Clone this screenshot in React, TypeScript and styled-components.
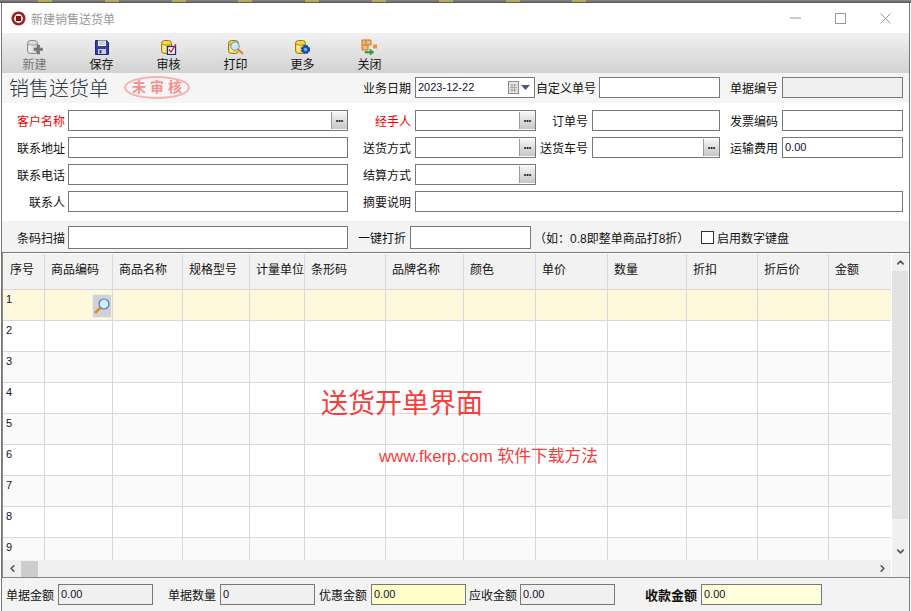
import styled, { createGlobalStyle } from "styled-components";
import { ChevronDown, ChevronLeft, ChevronRight, ChevronUp } from "lucide-react";

const GlobalStyle = createGlobalStyle`
  html, body {
    margin: 0;
    padding: 0;
    background: #fff;
    overflow: hidden;
  }
  * {
    box-sizing: border-box;
  }
`;

const FONT = `"Liberation Sans", "Noto Sans CJK SC", sans-serif`;

const Page = styled.div`
  width: 911px;
  height: 611px;
  display: flex;
  flex-direction: column;
  font-family: ${FONT};
  font-size: 12px;
  color: #111;
  overflow: hidden;
`;

const TopEdge = styled.div`
  height: 3px;
  flex: none;
  background: linear-gradient(#8a8a8a, #555);
`;

// 뒤쪽 창이 살짝 보이는 부분
const BackWindow = styled.div`
  width: 552px;
  height: 2px;
  margin-left: 38px;
  background: repeating-linear-gradient(
    90deg,
    #b9a95a 0 14px,
    transparent 14px 66.8px
  );
`;

const Frame = styled.div`
  flex: 1;
  width: 909px;
  margin-left: 1px;
  border-left: 1px solid #777;
  border-right: 1px solid #777;
  display: flex;
  flex-direction: column;
  min-height: 0;
`;

const TitleBar = styled.div`
  height: 30px;
  flex: none;
  background: #fff;
  display: flex;
  align-items: center;
  padding-left: 9px;
  gap: 5px;
  color: #999;
`;

const WindowControls = styled.div`
  margin-left: auto;
  padding-right: 1px;
  display: flex;
`;

const WindowControl = styled.div`
  width: 45px;
  height: 30px;
  display: flex;
  align-items: center;
  justify-content: center;
`;

const Toolbar = styled.div`
  height: 40px;
  flex: none;
  display: flex;
  background: linear-gradient(#f1f1f1, #d2d2d2);
`;

const ToolButton = styled.div<{ $disabled?: boolean }>`
  width: 67px;
  padding-top: 6px;
  display: flex;
  flex-direction: column;
  align-items: center;
  color: ${(p) => (p.$disabled ? "#777" : "#111")};
  line-height: 16px;
  &:first-child {
    margin-left: -1px;
  }
  svg {
    display: block;
    margin-bottom: 2px;
  }
`;

const HeaderBand = styled.div`
  height: 30px;
  flex: none;
  background: #f5f5f5;
  display: flex;
  align-items: center;
  padding-bottom: 1px;
`;

const FormTitle = styled.div`
  width: 122px;
  padding-left: 7px;
  font-size: 20px;
  font-weight: 300;
  color: #2e3644;
  white-space: nowrap;
  flex: none;
`;

const Stamp = styled.div`
  width: 66px;
  height: 23px;
  flex: none;
  border: 2px solid #f6b0b0;
  border-radius: 50%;
  color: #f29090;
  font-size: 14px;
  font-weight: 700;
  letter-spacing: 4px;
  text-indent: 4px;
  text-align: center;
  line-height: 18px;
  white-space: nowrap;
`;

const Form = styled.div`
  height: 118px;
  flex: none;
  background: #fff;
  padding-top: 7px;
  display: flex;
  flex-direction: column;
  gap: 6px;
`;

const Row = styled.div`
  display: flex;
  align-items: center;
  height: 21px;
`;

const Label = styled.div<{ $w: number; $gap?: number; $red?: boolean; $bold?: boolean }>`
  width: ${(p) => p.$w}px;
  margin-right: ${(p) => p.$gap ?? 4}px;
  flex: none;
  text-align: right;
  white-space: nowrap;
  color: ${(p) => (p.$red ? "#f00000" : "#111")};
  font-weight: ${(p) => (p.$bold ? 700 : 400)};
  font-size: ${(p) => (p.$bold ? 13 : 12)}px;
`;

const Input = styled.div<{ $w: number; $h?: number; $bg?: string }>`
  width: ${(p) => p.$w}px;
  height: ${(p) => p.$h ?? 21}px;
  flex: none;
  border: 1px solid #787878;
  background: ${(p) => p.$bg ?? "#fff"};
  display: flex;
  align-items: center;
  padding-left: 2px;
  padding-bottom: 1px;
  font-size: 11px;
  color: #101030;
  white-space: nowrap;
`;

const LookupButton = styled.div`
  margin-left: auto;
  width: 16px;
  height: 17px;
  background: linear-gradient(#f6f6f6, #c6c6c6);
  border-left: 1px solid #9a9a9a;
  display: flex;
  align-items: center;
  justify-content: center;
  font-size: 7px;
  font-weight: 700;
  line-height: 1;
  color: #222;
`;

const DatePickerIcons = styled.div`
  margin-left: auto;
  display: flex;
  align-items: center;
  gap: 1px;
  padding-right: 4px;
`;

const ScanBand = styled.div`
  height: 31px;
  flex: none;
  background: #f3f3f3;
  display: flex;
  align-items: center;
  padding-top: 1px;
`;

const Hint = styled.div`
  margin-left: 3px;
  width: 167px;
  white-space: nowrap;
  flex: none;
`;

const CheckBox = styled.div`
  width: 13px;
  height: 13px;
  border: 1px solid #333;
  background: #fff;
  margin-right: 3px;
  flex: none;
`;

const GridArea = styled.div`
  position: relative;
  height: 326px;
  flex: none;
  border-top: 1px solid #777;
  border-bottom: 1px solid #888;
  border-left: 1px solid #888;
  padding-top: 1px;
  background: #fff;
  display: flex;
`;

const GridMain = styled.div`
  width: 888px;
  flex: none;
  display: flex;
  flex-direction: column;
`;

const Table = styled.div`
  height: 306px;
  overflow: hidden;
  flex: none;
`;

const TableRow = styled.div<{ $kind: "head" | "active" | "odd" | "even" }>`
  display: grid;
  grid-template-columns: 42px 68px 70px 67px 55px 81px 78px 72px 72px 79px 71px 71px 62px;
  height: ${(p) => (p.$kind === "head" ? 36 : 31)}px;
  border-bottom: 1px solid #d8d8d8;
  background: ${(p) =>
    p.$kind === "head"
      ? "#f2f2f2"
      : p.$kind === "active"
        ? "#fdf8dc"
        : p.$kind === "odd"
          ? "#fafafa"
          : "#fff"};
`;

const HeadCell = styled.div<{ $first?: boolean; $last?: boolean }>`
  border-right: ${(p) => (p.$last ? "none" : "1px solid #d8d8d8")};
  padding: 0 0 6px ${(p) => (p.$first ? 7 : 6)}px;
  display: flex;
  align-items: center;
  white-space: nowrap;
  overflow: hidden;
`;

const Cell = styled.div<{ $last?: boolean }>`
  border-right: ${(p) => (p.$last ? "none" : "1px solid #d8d8d8")};
  display: flex;
  justify-content: flex-end;
  align-items: flex-end;
`;

const RowNumber = styled.div`
  width: 100%;
  height: 100%;
  padding: 2px 0 0 3px;
  font-size: 11px;
  line-height: 14px;
  color: #101030;
`;

const SearchButton = styled.div`
  width: 20px;
  height: 24px;
  margin-bottom: 2px;
  background: #d2d2d2;
  border: 1px solid #eee;
  display: flex;
  align-items: center;
  justify-content: center;
`;

const HScroll = styled.div`
  height: 17px;
  flex: none;
  background: #f0f0f0;
  display: flex;
  align-items: center;
  color: #555;
`;

const ScrollEnd = styled.div<{ $right?: boolean }>`
  width: 18px;
  height: 16px;
  flex: none;
  margin-left: ${(p) => (p.$right ? "auto" : 0)};
  display: flex;
  align-items: center;
  justify-content: center;
`;

const HThumb = styled.div`
  width: 17px;
  height: 16px;
  background: #cdcdcd;
`;

const VScroll = styled.div`
  width: 16px;
  flex: none;
  margin-left: 1px;
  background: #f0f0f0;
  display: flex;
  flex-direction: column;
  align-items: center;
  padding-bottom: 17px;
  color: #555;
`;

const VThumb = styled.div`
  width: 16px;
  height: 248px;
  background: #e2e2e2;
`;

const VScrollEnd = styled.div<{ $bottom?: boolean }>`
  height: 17px;
  width: 16px;
  display: flex;
  align-items: center;
  justify-content: center;
  margin-top: ${(p) => (p.$bottom ? "auto" : 0)};
`;

const OverlayTitle = styled.div`
  position: absolute;
  left: 318px;
  top: 131px;
  font-size: 27px;
  line-height: 40px;
  color: #f83d3d;
  white-space: nowrap;
`;

const OverlayLink = styled.div`
  position: absolute;
  left: 376px;
  top: 192px;
  font-size: 16.8px;
  line-height: 24px;
  color: #f83d3d;
  white-space: nowrap;
`;

const Footer = styled.div`
  flex: 1;
  background: #f3f3f3;
  padding-top: 6px;
`;

const CloseIcon = () => (
  <svg width="11" height="11" viewBox="0 0 11 11">
    <path d="M.5.5l10 10M10.5.5l-10 10" stroke="#999" fill="none" />
  </svg>
);

const AppLogo = () => (
  <svg width="15" height="15" viewBox="0 0 15 15">
    <circle cx="7.5" cy="7.5" r="7" fill="#a81c1c" />
    <circle cx="7.5" cy="7.5" r="4.4" fill="#fff" />
    <rect x="5" y="5" width="5" height="5" fill="#7a1414" />
  </svg>
);

const Cylinder = ({ fill, edge }: { fill: string; edge: string }) => (
  <>
    <rect x="1.5" y="1.5" width="10" height="13" rx="3" fill={fill} stroke={edge} />
    <path d="M2 5c2 1.6 7 1.6 9 0" fill="none" stroke={edge} strokeWidth=".8" />
    <rect x="3" y="6.5" width="2.5" height="6.5" fill="#fff" opacity=".55" />
  </>
);

const NewIcon = () => (
  <svg width="17" height="16" viewBox="0 0 17 16">
    <Cylinder fill="#dcdcdc" edge="#8a8a8a" />
    <path d="M8 9h3V6h2.500v3H16.500v2.500h-3V15H11v-3.500H8z" fill="#777" stroke="#666" strokeWidth=".5" />
  </svg>
);

const SaveIcon = () => (
  <svg width="14" height="16" viewBox="0 0 14 16">
    <path d="M.5 1.500h11l2 2v12H.5z" fill="#35409a" stroke="#20286e" />
    <rect x="3" y="1.500" width="8" height="5.500" fill="#f0f0f0" />
    <path d="M4 3h6M4 5h6" stroke="#aaa" />
    <rect x="3" y="10" width="8" height="5" fill="#c9cde8" />
    <rect x="4.500" y="11" width="2" height="3.500" fill="#35409a" />
  </svg>
);

const AuditIcon = () => (
  <svg width="17" height="16" viewBox="0 0 17 16">
    <Cylinder fill="#f6d648" edge="#9a7a10" />
    <rect x="7.500" y="7.500" width="8" height="8" fill="#fff" stroke="#1c2f90" strokeWidth="1.300" />
    <path d="M9 10.500l2 2.500 5-8" fill="none" stroke="#e02020" strokeWidth="1.400" />
  </svg>
);

const PrintIcon = () => (
  <svg width="17" height="16" viewBox="0 0 17 16">
    <Cylinder fill="#f6d648" edge="#9a7a10" />
    <circle cx="8" cy="7" r="4.200" fill="#cfe6fa" stroke="#6a8fc0" />
    <path d="M11 10l5 5" stroke="#d98a30" strokeWidth="2" />
  </svg>
);

const MoreIcon = () => (
  <svg width="17" height="16" viewBox="0 0 17 16">
    <Cylinder fill="#f6d648" edge="#9a7a10" />
    <circle cx="11.500" cy="10.500" r="3.800" fill="#1a5cc8" stroke="#0d3a90" strokeDasharray="2 1" strokeWidth="1.500" />
    <circle cx="11.500" cy="10.500" r="1.400" fill="#8cc0f5" />
  </svg>
);

const ExitIcon = () => (
  <svg width="17" height="16" viewBox="0 0 17 16">
    <path d="M1 1h9v5h-3v5H1z" fill="#f6b870" stroke="#c07a30" />
    <path d="M1 6h6M5 1v5" stroke="#c07a30" />
    <rect x="12" y="5.500" width="4" height="4" fill="#f09030" />
    <path d="M4 12.500h5V10l4 3.300-4 2.700v-2H4z" fill="#38a838" stroke="#1c7a1c" strokeWidth=".5" />
  </svg>
);

const CalendarIcon = () => (
  <svg width="12" height="13" viewBox="0 0 12 13">
    <rect x=".5" y=".5" width="10" height="12" fill="#e8e8e8" stroke="#8a8a8a" />
    <path d="M2 4h7M2 6.500h7M2 9h7M4 3v8M6.500 3v8" stroke="#a8a8a8" />
  </svg>
);

const DropArrow = () => (
  <svg width="9" height="5" viewBox="0 0 9 5">
    <path d="M0 0h9L4.500 5z" fill="#4a5a7a" />
  </svg>
);

const MagnifierIcon = () => (
  <svg width="18" height="18" viewBox="0 0 18 18">
    <circle cx="11" cy="7" r="5" fill="#d6ebfb" stroke="#3f7fc0" strokeWidth="1.200" />
    <path d="M7.500 10.500L2 16" stroke="#e08a28" strokeWidth="2.500" />
  </svg>
);

const Lookup = () => <LookupButton>•••</LookupButton>;

const tools = [
  { label: "新建", icon: <NewIcon />, disabled: true },
  { label: "保存", icon: <SaveIcon /> },
  { label: "审核", icon: <AuditIcon /> },
  { label: "打印", icon: <PrintIcon /> },
  { label: "更多", icon: <MoreIcon /> },
  { label: "关闭", icon: <ExitIcon /> },
];

const columns = [
  "序号",
  "商品编码",
  "商品名称",
  "规格型号",
  "计量单位",
  "条形码",
  "品牌名称",
  "颜色",
  "单价",
  "数量",
  "折扣",
  "折后价",
  "金额",
];

const rows = [1, 2, 3, 4, 5, 6, 7, 8, 9];

export default function App() {
  return (
    <Page>
      <GlobalStyle />
      <TopEdge>
        <BackWindow />
      </TopEdge>
      <Frame>
        <TitleBar>
          <AppLogo />
          <span>新建销售送货单</span>
          <WindowControls>
            <WindowControl>
              <svg width="11" height="2" viewBox="0 0 11 2">
                <path d="M0 1h11" stroke="#999" />
              </svg>
            </WindowControl>
            <WindowControl>
              <svg width="11" height="11" viewBox="0 0 11 11">
                <rect x=".5" y=".5" width="10" height="10" fill="none" stroke="#999" />
              </svg>
            </WindowControl>
            <WindowControl>
              <CloseIcon />
            </WindowControl>
          </WindowControls>
        </TitleBar>

        <Toolbar>
          {tools.map((tool) => (
            <ToolButton key={tool.label} $disabled={tool.disabled}>
              {tool.icon}
              <span>{tool.label}</span>
            </ToolButton>
          ))}
        </Toolbar>

        <HeaderBand>
          <FormTitle>销售送货单</FormTitle>
          <Stamp>未审核</Stamp>
          <Label $w={221}>业务日期</Label>
          <Input $w={120}>
            2023-12-22
            <DatePickerIcons>
              <CalendarIcon />
              <DropArrow />
            </DatePickerIcons>
          </Input>
          <Label $w={61} $gap={3}>
            自定义单号
          </Label>
          <Input $w={121} />
          <Label $w={58}>单据编号</Label>
          <Input $w={121} $bg="#f0f0f0" />
        </HeaderBand>

        <Form>
          <Row>
            <Label $w={63} $gap={3} $red>
              客户名称
            </Label>
            <Input $w={280}>
              <Lookup />
            </Input>
            <Label $w={63} $red>
              经手人
            </Label>
            <Input $w={121}>
              <Lookup />
            </Input>
            <Label $w={52}>订单号</Label>
            <Input $w={128} />
            <Label $w={58}>发票编码</Label>
            <Input $w={121} />
          </Row>
          <Row>
            <Label $w={63} $gap={3}>
              联系地址
            </Label>
            <Input $w={280} />
            <Label $w={63}>送货方式</Label>
            <Input $w={121}>
              <Lookup />
            </Input>
            <Label $w={52}>送货车号</Label>
            <Input $w={128}>
              <Lookup />
            </Input>
            <Label $w={58}>运输费用</Label>
            <Input $w={121}>0.00</Input>
          </Row>
          <Row>
            <Label $w={63} $gap={3}>
              联系电话
            </Label>
            <Input $w={280} />
            <Label $w={63}>结算方式</Label>
            <Input $w={121}>
              <Lookup />
            </Input>
          </Row>
          <Row>
            <Label $w={63} $gap={3}>
              联系人
            </Label>
            <Input $w={280} />
            <Label $w={63}>摘要说明</Label>
            <Input $w={488} />
          </Row>
        </Form>

        <ScanBand>
          <Label $w={63} $gap={3}>
            条码扫描
          </Label>
          <Input $w={280} $h={23} />
          <Label $w={58}>一键打折</Label>
          <Input $w={121} $h={23} />
          <Hint>（如：0.8即整单商品打8折）</Hint>
          <CheckBox />
          <span>启用数字键盘</span>
        </ScanBand>

        <GridArea>
          <GridMain>
            <Table>
              <TableRow $kind="head">
                {columns.map((name, i) => (
                  <HeadCell key={name} $first={i === 0} $last={i === columns.length - 1}>
                    {name}
                  </HeadCell>
                ))}
              </TableRow>
              {rows.map((n) => (
                <TableRow key={n} $kind={n === 1 ? "active" : n % 2 ? "odd" : "even"}>
                  {columns.map((name, i) => (
                    <Cell key={name} $last={i === columns.length - 1}>
                      {i === 0 && <RowNumber>{n}</RowNumber>}
                      {i === 1 && n === 1 && (
                        <SearchButton>
                          <MagnifierIcon />
                        </SearchButton>
                      )}
                    </Cell>
                  ))}
                </TableRow>
              ))}
            </Table>
            <HScroll>
              <ScrollEnd>
                <ChevronLeft size={11} strokeWidth={3.5} />
              </ScrollEnd>
              <HThumb />
              <ScrollEnd $right>
                <ChevronRight size={11} strokeWidth={3.5} />
              </ScrollEnd>
            </HScroll>
          </GridMain>
          <VScroll>
            <VScrollEnd>
              <ChevronUp size={11} strokeWidth={3.5} />
            </VScrollEnd>
            <VThumb />
            <VScrollEnd $bottom>
              <ChevronDown size={11} strokeWidth={3.5} />
            </VScrollEnd>
          </VScroll>
          <OverlayTitle>送货开单界面</OverlayTitle>
          <OverlayLink>www.fkerp.com 软件下载方法</OverlayLink>
        </GridArea>

        <Footer>
          <Row>
            <Label $w={52}>单据金额</Label>
            <Input $w={95} $bg="#f0f0f0">
              0.00
            </Input>
            <Label $w={63}>单据数量</Label>
            <Input $w={95} $bg="#f0f0f0">
              0
            </Input>
            <Label $w={52}>优惠金额</Label>
            <Input $w={95} $bg="#ffffc8">
              0.00
            </Input>
            <Label $w={51} $gap={3}>
              应收金额
            </Label>
            <Input $w={95} $bg="#f0f0f0">
              0.00
            </Input>
            <Label $w={82} $bold>
              收款金额
            </Label>
            <Input $w={121} $bg="#ffffdc">
              0.00
            </Input>
          </Row>
        </Footer>
      </Frame>
    </Page>
  );
}
